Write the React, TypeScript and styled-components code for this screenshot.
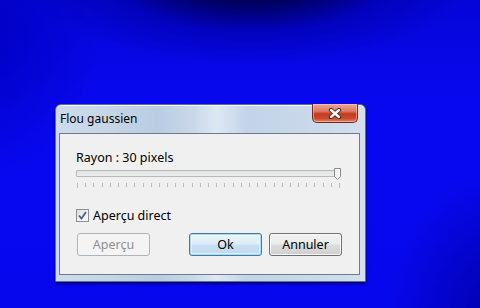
import styled, { createGlobalStyle } from 'styled-components';

const GlobalStyle = createGlobalStyle`
  html, body {
    margin: 0;
    padding: 0;
  }
  body {
    font-family: "Noto Sans", "Open Sans", sans-serif;
    font-size: 12px;
    color: #000;
  }
`

const Desktop = styled.div`
  width: 480px;
  height: 308px;
  box-sizing: border-box;
  padding: 104px 0 0 55px;
  overflow: hidden;
  background-color: #0707ee;
  background-image:
    radial-gradient(ellipse 230px 95px at 250px -30px, #00002c 0%, #000060 35%, rgba(0, 0, 170, 0.6) 65%, rgba(0, 0, 230, 0) 100%),
    radial-gradient(ellipse 120px 150px at 505px 320px, #0000a8 0%, rgba(0, 0, 220, 0) 100%),
    radial-gradient(ellipse 120px 140px at -20px 40px, #0000c4 0%, rgba(0, 0, 230, 0) 100%),
    linear-gradient(180deg, #0505d8 0%, #0808f0 35%, #0707ee 100%);
`

const Window = styled.div`
  width: 311px;
  height: 178px;
  box-sizing: border-box;
  border: 1px solid #5c6f86;
  border-radius: 6px 6px 1px 1px;
  display: flex;
  flex-direction: column;
  background:
    linear-gradient(90deg,
      #cddbea 0%, #c5d5e7 18%, #b9cce2 33%, #cad9ea 45%, #dde8f3 52%,
      #c3d4e8 62%, #c8d8ea 80%, #d3dfec 100%);
  box-shadow: inset 0 1px 0 #f4f8fc, 0 2px 3px rgba(0, 0, 40, 0.6);
`

const TitleBar = styled.div`
  height: 28px;
  display: flex;
  justify-content: space-between;
  align-items: flex-start;
  padding: 0 7px 0 4px;
`

const Title = styled.span`
  margin-top: 6px;
  font-size: 12px;
  line-height: 16px;
  color: #000;
`

const CloseButton = styled.div`
  width: 46px;
  height: 19px;
  margin-top: -1px;
  box-sizing: border-box;
  border: 1px solid #6e2c22;
  border-top: none;
  border-radius: 0 0 5px 5px;
  display: flex;
  align-items: center;
  justify-content: center;
  background: linear-gradient(180deg, #e9a896 0%, #dc7a62 40%, #c6381e 55%, #cc4a2c 80%, #e08a6c 100%);
  box-shadow: inset 0 0 0 1px rgba(255, 210, 200, 0.5);
`

const Client = styled.div`
  margin: 0 5px 0 3px;
  height: 142px;
  box-sizing: border-box;
  border: 1px solid #6d7b8c;
  background: #f0f0f0;
  padding: 16px 17px 0 16px;
  display: flex;
  flex-direction: column;
`

const Label = styled.div`
  line-height: 15px;
  height: 15px;
  font-size: 12.5px;
`

const SliderBox = styled.div`
  position: relative;
  margin-top: 5px;
  width: 266px;
`

const Track = styled.div`
  width: 265px;
  height: 7px;
  box-sizing: border-box;
  border: 1px solid #b6b9bb;
  border-radius: 1px;
  background: linear-gradient(180deg, #e2e4e4 0%, #eceeee 100%);
`

const Thumb = styled.svg`
  position: absolute;
  right: 1px;
  top: -2px;
`

const Ticks = styled.div`
  margin-top: 6px;
  width: 263px;
  margin-left: 1px;
  height: 4px;
  display: flex;
  justify-content: space-between;
`

const Tick = styled.span<{ $end?: boolean }>`
  width: 1px;
  height: ${p => (p.$end ? 5 : 4)}px;
  background: #b8babc;
`

const CheckRow = styled.label`
  margin-top: 22px;
  height: 13px;
  display: flex;
  align-items: center;
  gap: 4px;
  line-height: 13px;
  font-size: 12.5px;
`

const CheckBox = styled.span`
  width: 13px;
  height: 13px;
  box-sizing: border-box;
  border: 1px solid #8f8f8f;
  background: linear-gradient(135deg, #dcdcdc 0%, #f4f4f4 60%, #ffffff 100%);
  display: flex;
  align-items: center;
  justify-content: center;
`

const ButtonRow = styled.div`
  margin-top: 11px;
  display: flex;
  justify-content: space-between;
  padding-left: 1px;
`

const Group = styled.div`
  display: flex;
  gap: 7px;
`

const Button = styled.button<{ $variant?: 'default' | 'disabled' }>`
  width: 73px;
  height: 23px;
  padding: 0;
  font-family: inherit;
  font-size: 12.5px;
  border-radius: 3px;
  border: 1px solid ${p => (p.$variant === 'default' ? '#3d7bad' : p.$variant === 'disabled' ? '#b0b4b7' : '#707070')};
  color: ${p => (p.$variant === 'disabled' ? '#8f8f8f' : '#000')};
  background: ${p =>
    p.$variant === 'disabled'
      ? '#f4f4f4'
      : p.$variant === 'default'
        ? 'linear-gradient(180deg, #eaf6fd 0%, #dcecf8 48%, #c9e0f2 52%, #bedaf0 100%)'
        : 'linear-gradient(180deg, #f2f2f2 0%, #ebebeb 48%, #dddddd 52%, #cfcfcf 100%)'};
  box-shadow: ${p =>
    p.$variant === 'default'
      ? 'inset 0 0 0 1px #a9daf4, inset 0 0 0 2px rgba(255,255,255,0.5)'
      : p.$variant === 'disabled'
        ? 'none'
        : 'inset 0 0 0 1px rgba(255,255,255,0.8)'};
`

const App = () => {
  const ticks = Array.from({ length: 33 }, (_, i) => i)

  return (
    <>
      <GlobalStyle />
      <Desktop>
        <Window>
          <TitleBar>
            <Title>Flou gaussien</Title>
            <CloseButton>
              <svg width="14" height="11" viewBox="0 0 14 11">
                <path d="M3 2 L11 9 M11 2 L3 9" stroke="#4a1a14" strokeWidth="4.2" strokeLinecap="round" />
                <path d="M3 2 L11 9 M11 2 L3 9" stroke="#ffffff" strokeWidth="2.4" strokeLinecap="round" />
              </svg>
            </CloseButton>
          </TitleBar>
          <Client>
            <Label>Rayon : 30 pixels</Label>
            <SliderBox>
              <Track />
              <Thumb width="7" height="12" viewBox="0 0 7 12">
                <path d="M0.5 0.5 H6.5 V8.5 L3.5 11.5 L0.5 8.5 Z" fill="#f2f2f2" stroke="#8a8a8a" />
                <path d="M1.5 1.5 H5.5 V8" stroke="#ffffff" fill="none" />
              </Thumb>
            </SliderBox>
            <Ticks>
              {ticks.map(i => (
                <Tick key={i} $end={i === 0 || i === ticks.length - 1} />
              ))}
            </Ticks>
            <CheckRow>
              <CheckBox>
                <svg width="9" height="9" viewBox="0 0 9 9">
                  <path d="M1 4.5 L3.5 7.5 L8 1" stroke="#4a5e8c" strokeWidth="1.8" fill="none" />
                </svg>
              </CheckBox>
              Aperçu direct
            </CheckRow>
            <ButtonRow>
              <Button $variant="disabled">Aperçu</Button>
              <Group>
                <Button $variant="default">Ok</Button>
                <Button>Annuler</Button>
              </Group>
            </ButtonRow>
          </Client>
        </Window>
      </Desktop>
    </>
  )
}

export default App
